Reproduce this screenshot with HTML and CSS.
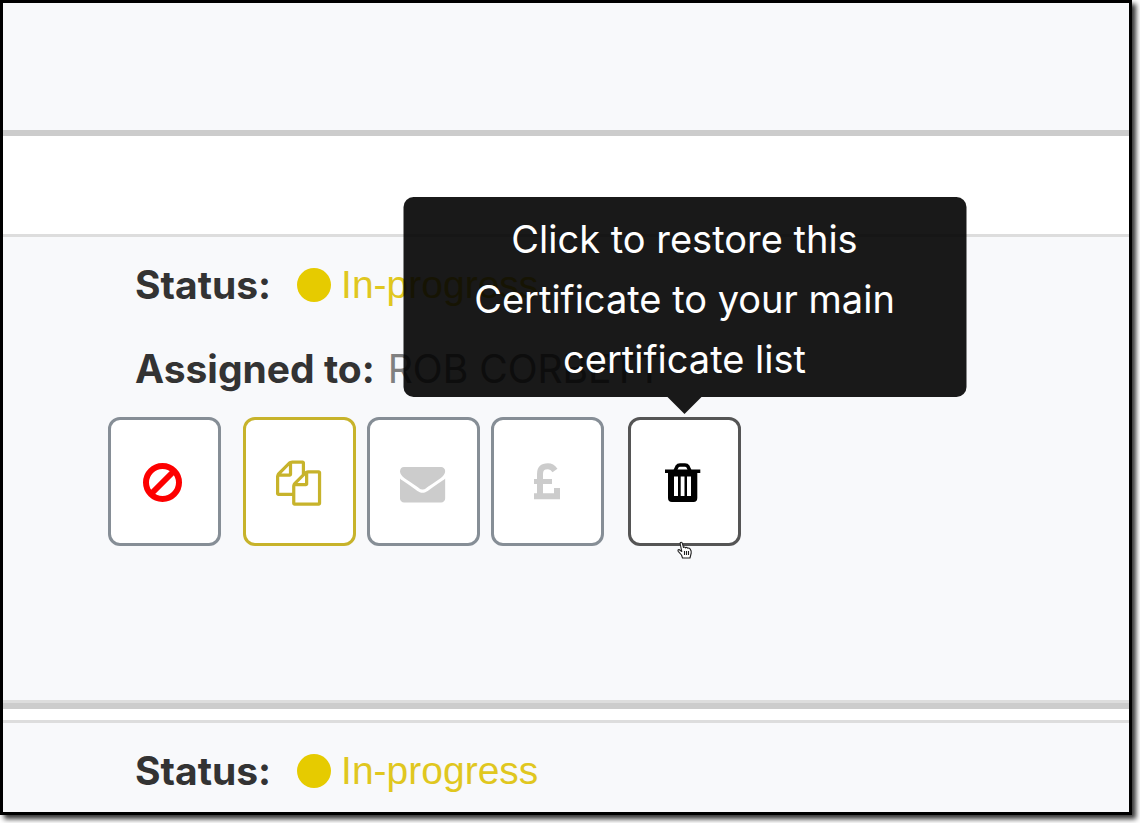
FILE: index.html
```html
<!DOCTYPE html>
<html lang="en">
<head>
<meta charset="utf-8">
<meta name="viewport" content="width=device-width, initial-scale=1">
<title>Certificates</title>
<link rel="stylesheet" href="styles.css">
</head>
<body>
<main class="frame">
  <section class="row row-empty"></section>
  <div class="spacer"></div>
  <section class="row row-main">
    <p class="line"><span class="label">Status:</span><span class="status"><span class="dot"></span>In-progress</span></p>
    <p class="line line-assigned"><span class="label">Assigned to:</span><span class="person">ROB CORBETT</span></p>
    <div class="actions">
      <button class="action" type="button" aria-label="Void">
        <svg class="icon" viewBox="0 0 47 47" fill="none" stroke="#fd0000" stroke-width="6"><circle cx="21.500" cy="24.500" r="16.500"/><path d="M33 13 10 36"/></svg>
      </button>
      <div class="group">
        <button class="action action-copy" type="button" aria-label="Copy">
          <svg class="icon" viewBox="0 0 47 47" fill="#c7b32b"><path transform="translate(0 2.500) scale(.0252)" d="M1696 384q40 0 68 28t28 68v1216q0 40-28 68t-68 28h-960q-40 0-68-28t-28-68v-288h-544q-40 0-68-28t-28-68v-672q0-40 20-88t48-76l408-408q28-28 76-48t88-20h416q40 0 68 28t28 68v328q68-40 128-40h416zm-544 213l-299 299h299v-299zm-640-384l-299 299h299v-299zm196 647l316-316v-416h-384v416q0 40-28 68t-68 28h-416v640h512v-256q0-40 20-88t48-76zm956 804v-1152h-384v416q0 40-28 68t-68 28h-416v640h896z"/></svg>
        </button>
        <button class="action" type="button" aria-label="Email">
          <svg class="icon" viewBox="0 0 47 47" fill="#ccc"><path transform="translate(0 2.500) scale(.0252)" d="M1792 710v794q0 66-47 113t-113 47h-1472q-66 0-113-47t-47-113v-794q44 49 101 87 362 246 497 345 57 42 92.500 65.500t94.500 48 110 24.500h2q51 0 110-24.500t94.500-48 92.500-65.500q170-123 498-345 57-39 100-87zm0-294q0 79-49 151t-122 123q-376 261-468 325-10 7-42.500 31t-54 38.500-52 32.500-57.500 27-50 9h-2q-23 0-50-9t-57.500-27-52-32.500-54-38.500-42.500-31q-91-64-262-182.500t-205-142.500q-62-42-117-115.500t-55-136.500q0-78 41.500-130t118.500-52h1472q65 0 112.500 47t47.500 113z"/></svg>
        </button>
        <button class="action" type="button" aria-label="Invoice">
          <svg class="icon" viewBox="0 0 47 47" fill="none" stroke="#ccc" stroke-width="6"><path d="M16 38V16C16 10 19 8.300 24 8.300Q28 8.300 31 12.500"/><path stroke-width="5" d="M10 23.500h18"/><path d="M10 38.200h23V30"/></svg>
        </button>
      </div>
      <div class="restore">
        <button class="action action-restore" type="button" aria-label="Restore" aria-describedby="restore-tip">
          <svg class="icon" viewBox="0 0 47 47"><path fill="none" stroke="#000" stroke-width="3.500" d="M14 13 16 8.500Q17 7 19 7h5Q26 7 27 8.500L29 13"/><path fill-rule="evenodd" d="M4 11.500H39.300V15H36.300V40Q36.300 44 32.500 44H11Q7 44 7 40V15H4ZM13 18.500V38H17V18.500ZM19.700 18.500V38H23.500V18.500ZM26 18.500V38H30V18.500Z"/></svg>
        </button>
        <div class="tooltip" id="restore-tip" role="tooltip">Click to restore this Certificate to your main certificate list</div>
        <svg class="pointer" viewBox="0 0 16 18" fill="#fff" stroke="#222" stroke-width="1.100" stroke-linejoin="round"><path d="M5.500 17 4.500 14 1.200 10.300Q.5 8.600 2 8.500L4.800 10.500 3.200 3Q3 1.200 4.300 1.200 5.200 1.200 5.500 2.800L6.500 6.500Q7.400 5.400 8.500 6.800 9.900 5.800 10.800 7.300 12.600 6.500 13.300 8.400 14.500 9.800 14.200 12L13 17Z"/><path d="M7.500 10v4M9.500 10v4M11.500 10v4"/></svg>
      </div>
    </div>
  </section>
  <div class="spacer spacer-thin"></div>
  <section class="row row-next">
    <p class="line"><span class="label">Status:</span><span class="status"><span class="dot"></span>In-progress</span></p>
  </section>
</main>
</body>
</html>
```
FILE: styles.css
```css
* {
  box-sizing: border-box;
}

body {
  display: flex;
  min-height: 100vh;
  margin: 0;
  padding: 0 8px 8px 0;
  background: #fff;
  font-family: Inter, "Liberation Sans", sans-serif;
  font-size: 39px;
  line-height: 60px;
  color: #333;
}

.frame {
  flex: 1;
  min-width: 0;
  border: 3px solid #000;
  background: #f8f9fb;
  box-shadow: 4px 4px 5px rgba(0, 0, 0, 0.8);
}

.row {
  padding: 18px 24px 24px 105px;
}

.row-empty {
  padding: 64px 0 63px;
}

.row-main {
  padding-bottom: 154px;
  border-bottom: 3px solid #ddd;
}

.row-next {
  padding-bottom: 8px;
}

.spacer {
  height: 107px;
  border-top: 6px solid #ccc;
  border-bottom: 3px solid #ddd;
  background: #fff;
}

.spacer-thin {
  height: 20px;
}

.line {
  display: flex;
  align-items: center;
  margin: 0;
  padding-left: 27px;
  white-space: nowrap;
}

.line-assigned {
  margin-top: 24px;
}

.label {
  font-weight: 700;
}

.status {
  display: flex;
  align-items: center;
  margin-left: 26px;
  color: #e0c71f;
  font-family: "Liberation Sans", Arial, sans-serif;
}

.dot {
  width: 34px;
  height: 34px;
  margin-right: 10px;
  border-radius: 50%;
  background: #e6cb00;
}

.person {
  margin-left: 13px;
  color: #808080;
}

.actions {
  display: flex;
  gap: 22px;
  margin-top: 18px;
}

.group {
  display: flex;
  gap: 11px;
}

.action {
  display: flex;
  align-items: center;
  justify-content: center;
  width: 113px;
  height: 129px;
  padding: 0;
  border: 3px solid #868e96;
  border-radius: 12px;
  background: #fff;
  cursor: pointer;
}

.action-copy {
  border-color: #c7b32b;
}

.action-restore {
  border-color: #555;
}

.icon {
  width: 47px;
  height: 47px;
  overflow: visible;
}

.restore {
  position: relative;
  margin-left: 2px;
}

.tooltip {
  position: absolute;
  bottom: calc(100% + 20px);
  left: 50%;
  width: 563px;
  padding: 12px 60px 8px;
  border-radius: 10px;
  background: rgba(0, 0, 0, 0.9);
  color: #fff;
  font-size: 38px;
  text-align: center;
  transform: translateX(-50%);
}

.tooltip::after {
  content: "";
  position: absolute;
  top: 100%;
  left: 50%;
  margin-left: -17px;
  border: 17px solid transparent;
  border-top-color: rgba(0, 0, 0, 0.9);
  border-bottom: 0;
}

.pointer {
  position: absolute;
  top: 124px;
  left: 49px;
  width: 16px;
  height: 18px;
}
```
